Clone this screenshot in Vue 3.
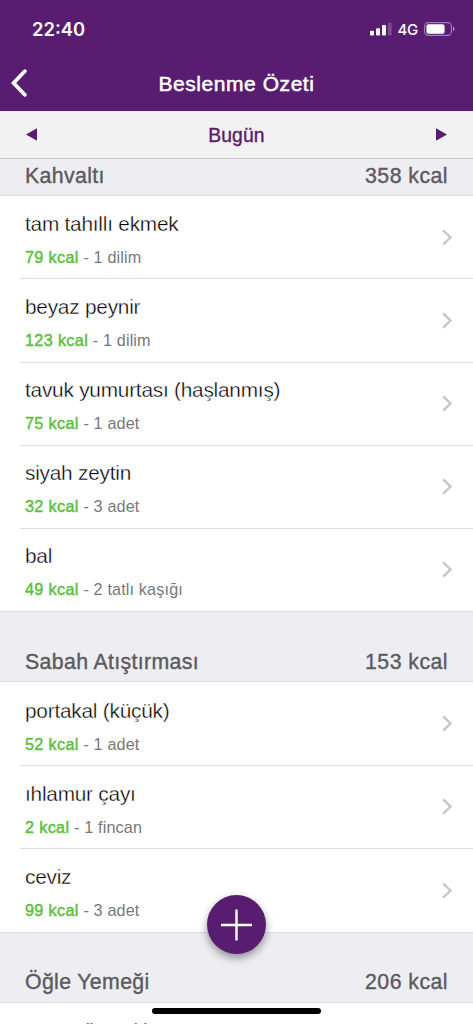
<script setup>
const sections = [
  {
    name: 'Kahvaltı', total: '358 kcal', items: [
      { name: 'tam tahıllı ekmek', kcal: 79, amount: '1 dilim' },
      { name: 'beyaz peynir', kcal: 123, amount: '1 dilim' },
      { name: 'tavuk yumurtası (haşlanmış)', kcal: 75, amount: '1 adet' },
      { name: 'siyah zeytin', kcal: 32, amount: '3 adet' },
      { name: 'bal', kcal: 49, amount: '2 tatlı kaşığı' },
    ],
  },
  {
    name: 'Sabah Atıştırması', total: '153 kcal', items: [
      { name: 'portakal (küçük)', kcal: 52, amount: '1 adet' },
      { name: 'ıhlamur çayı', kcal: 2, amount: '1 fincan' },
      { name: 'ceviz', kcal: 99, amount: '3 adet' },
    ],
  },
  {
    name: 'Öğle Yemeği', total: '206 kcal', items: [
      { name: 'armut (büyük)' },
    ],
  },
]
</script>

<template>
  <div class="screen">
    <header class="top">
      <div class="status">
        <span class="time">22:40</span>
        <svg class="signal" width="22" height="14" viewBox="0 0 22 14" fill="#fff">
          <rect x="0" y="8.8" width="4" height="4.6" rx="1" />
          <rect x="6" y="6.2" width="4" height="7.2" rx="1" />
          <rect x="12" y="3" width="4" height="10.4" rx="1" />
          <rect x="18" y="0.8" width="3.6" height="12.6" rx="1" opacity=".22" />
        </svg>
        <span class="net">4G</span>
        <svg class="battery" width="31" height="14" viewBox="0 0 31 14">
          <rect x=".6" y=".6" width="26.8" height="12.8" rx="3.8" fill="none" stroke="#fff" stroke-opacity=".45" stroke-width="1.1" />
          <rect x="2.4" y="2.2" width="18.2" height="9.6" rx="2" fill="#fff" />
          <path d="M29 4.6c2 .8 2 4 0 4.8z" fill="#fff" fill-opacity=".5" />
        </svg>
      </div>
      <div class="nav">
        <svg class="back" width="18" height="28" viewBox="0 0 18 28" fill="none" stroke="#fff" stroke-width="3.8" stroke-linecap="round"><path d="M14.8 2.2 3.6 14l11.2 11.8" /></svg>
        <h1>Beslenme Özeti</h1>
      </div>
    </header>
    <div class="day">
      <svg width="11" height="13" viewBox="0 0 11 13"><path d="M0 6.5 11 .3v12.4z" fill="#581d70" /></svg>
      <span>Bugün</span>
      <svg width="11" height="13" viewBox="0 0 11 13"><path d="M11 6.5 0 .3v12.4z" fill="#581d70" /></svg>
    </div>
    <main>
      <section v-for="s in sections" :key="s.name">
        <div class="head"><span>{{ s.name }}</span><span class="total">{{ s.total }}</span></div>
        <div v-for="item in s.items" :key="item.name" class="row">
          <div class="text">
            <div class="name">{{ item.name }}</div>
            <div class="sub"><template v-if="item.kcal"><b>{{ item.kcal }} kcal</b> - {{ item.amount }}</template></div>
          </div>
          <svg width="11" height="17" viewBox="0 0 11 17" fill="none" stroke="#c5c5c9" stroke-width="2.3"><path d="M1.2 1.4 8.5 8.5l-7.3 7.1" /></svg>
        </div>
      </section>
    </main>
    <button class="fab" aria-label="Ekle">
      <svg width="32" height="32" viewBox="0 0 32 32" stroke="#fff" stroke-width="2.4"><path d="M15.5 .5v31M0 16h31" /></svg>
    </button>
    <div class="home"></div>
  </div>
</template>

<style>
body { margin: 0; overflow: hidden; }
</style>

<style scoped>
.screen {
  position: relative;
  display: flex;
  flex-direction: column;
  height: 1024px;
  overflow: hidden;
  background: #fff;
  font-family: "Liberation Sans", Arial, sans-serif;
}
.top { height: 111px; flex: none; background: #581d70; color: #fff; }
.status { display: flex; align-items: center; height: 58px; padding: 0 18px 0 32px; }
.time { flex: 1; font: 600 18.4px/22px Inter, sans-serif; }
.signal { margin-right: 6px; }
.net { padding-top: 1px; font: 500 15px/18px Inter, sans-serif; letter-spacing: -.3px; margin-right: 6px; }
.nav { position: relative; display: flex; align-items: center; justify-content: center; height: 51px; }
.back { position: absolute; left: 10px; top: 11px; }
h1 { margin: 0; font-size: 21px; line-height: 24px; font-weight: 400; letter-spacing: .55px; -webkit-text-stroke: .5px currentColor; }
.day {
  display: flex;
  flex: none;
  align-items: center;
  justify-content: space-between;
  box-sizing: border-box;
  height: 48px;
  padding: 0 26px;
  border-bottom: 1px solid #c6c6c9;
  background: #f2f2f2;
  color: #581d70;
  font-size: 19.3px;
  -webkit-text-stroke: .4px currentColor;
}
.day span { padding-top: 2px; letter-spacing: .15px; }
main { flex: 1; min-height: 0; overflow: hidden; }
.head {
  display: flex;
  align-items: flex-end;
  justify-content: space-between;
  box-sizing: border-box;
  height: 71.4px;
  padding: 0 25px 7.6px;
  border-top: 1px solid #dadade;
  border-bottom: 1px solid #dadade;
  background: #eeeef2;
  color: #5b5b5f;
  font-size: 21.3px;
  line-height: 24px;
  letter-spacing: .35px;
  -webkit-text-stroke: .4px currentColor;
}
section:first-child .head { height: 36.8px; padding-bottom: 7px; border-top: 0; }
.total { letter-spacing: .45px; }
.row {
  position: relative;
  display: flex;
  align-items: center;
  justify-content: space-between;
  box-sizing: border-box;
  height: 83.05px;
  padding: 0 20px 0 25px;
}
.row + .row::before { content: ""; position: absolute; top: -.4px; left: 20px; right: 0; height: 1px; background: #dedee0; }
.text { padding-top: 4.8px; }
section:last-child .text { padding-top: 4px; }
.name { font-size: 20.8px; line-height: 24px; letter-spacing: -.22px; white-space: pre; color: #000; -webkit-text-stroke: .35px #fff; }
.sub { min-height: 20px; margin-top: 11px; font-size: 16.2px; line-height: 20px; letter-spacing: .15px; color: #77777a; white-space: pre; }
.sub b { font-weight: 400; color: #5bbf3b; letter-spacing: .35px; -webkit-text-stroke: .45px currentColor; }
.fab {
  position: absolute;
  left: 207px;
  top: 895px;
  display: flex;
  align-items: center;
  justify-content: center;
  width: 59px;
  height: 59px;
  padding: 0;
  border: 0;
  border-radius: 50%;
  background: #581d70;
  box-shadow: 0 4px 8px rgba(0, 0, 0, .4);
}
.home { position: absolute; left: 152px; top: 1007.5px; width: 169px; height: 6.5px; border-radius: 4px; background: #000; }
</style>
